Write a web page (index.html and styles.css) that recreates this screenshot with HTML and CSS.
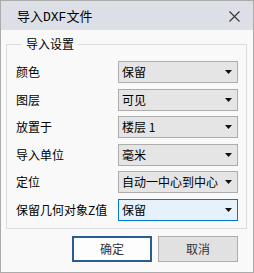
FILE: index.html
```html
<!DOCTYPE html>
<html lang="zh">
<head>
<meta charset="utf-8">
<link rel="stylesheet" href="styles.css">
</head>
<body>
<div class="window">
  <div class="titlebar">
    <span class="title">导入DXF文件</span>
    <svg class="close" width="11" height="11" viewBox="0 0 11 11"><path d="M0.5 0.5 L10.5 10.5 M10.5 0.5 L0.5 10.5" stroke="#333" stroke-width="1.1" fill="none"/></svg>
  </div>
  <fieldset class="group">
    <legend>导入设置</legend>
    <div class="rows">
      <span class="label">颜色</span>
      <div class="select"><span>保留</span><svg class="arrow" width="7" height="4" viewBox="0 0 7 4"><polygon points="0,0 7,0 3.5,4" fill="#111"/></svg></div>
      <span class="label">图层</span>
      <div class="select"><span>可见</span><svg class="arrow" width="7" height="4" viewBox="0 0 7 4"><polygon points="0,0 7,0 3.5,4" fill="#111"/></svg></div>
      <span class="label">放置于</span>
      <div class="select"><span>楼层 1</span><svg class="arrow" width="7" height="4" viewBox="0 0 7 4"><polygon points="0,0 7,0 3.5,4" fill="#111"/></svg></div>
      <span class="label">导入单位</span>
      <div class="select"><span>毫米</span><svg class="arrow" width="7" height="4" viewBox="0 0 7 4"><polygon points="0,0 7,0 3.5,4" fill="#111"/></svg></div>
      <span class="label">定位</span>
      <div class="select"><span>自动一中心到中心</span><svg class="arrow" width="7" height="4" viewBox="0 0 7 4"><polygon points="0,0 7,0 3.5,4" fill="#111"/></svg></div>
      <span class="label">保留几何对象Z值</span>
      <div class="select focused"><span>保留</span><svg class="arrow" width="7" height="4" viewBox="0 0 7 4"><polygon points="0,0 7,0 3.5,4" fill="#111"/></svg></div>
    </div>
  </fieldset>
  <div class="buttons">
    <button class="btn primary">确定</button>
    <button class="btn">取消</button>
  </div>
</div>
</body>
</html>
```
FILE: styles.css
```css
html, body {
  margin: 0;
  padding: 0;
  background: #ffffff;
}
.window {
  width: 254px;
  height: 273px;
  box-sizing: border-box;
  border: 1px solid #ababab;
  background: #f9f9f9;
  display: flex;
  flex-direction: column;
  font-family: "Noto Sans CJK SC", sans-serif;
  font-size: 12px;
  color: #000;
}
.titlebar {
  height: 29px;
  background: #dce0e6;
  display: flex;
  align-items: center;
  justify-content: space-between;
  padding: 0 13px 0 16px;
}
.title {
  font-family: "Liberation Mono", "Noto Sans CJK SC", monospace;
  font-size: 13px;
  color: #000;
}
.close {
  display: block;
  margin-top: 1px;
}
.group {
  margin: 6px 6px 0 5px;
  padding: 0 8px 7px 9px;
  border: 1px solid #dcdcdc;
  min-width: 0;
}
.group legend {
  margin-left: 6px;
  padding: 0 4px;
  line-height: 16px;
  font-size: 12px;
}
.rows {
  padding-top: 9px;
  display: grid;
  grid-template-columns: 102px 120px;
  row-gap: 5.6px;
  align-items: center;
}
.label {
  line-height: 16px;
  white-space: nowrap;
}
.select {
  height: 22px;
  box-sizing: border-box;
  border: 1px solid #adadad;
  background: #e5e5e5;
  display: flex;
  align-items: center;
  justify-content: space-between;
  padding: 0 5px 0 3px;
  line-height: 16px;
  white-space: nowrap;
}
.select.focused {
  border-color: #0078d7;
  background: #e5f1fb;
}
.arrow {
  display: block;
}
.buttons {
  display: flex;
  justify-content: flex-end;
  gap: 6px;
  margin-top: 7px;
  padding-right: 15px;
}
.btn {
  width: 80px;
  height: 26px;
  box-sizing: border-box;
  border: 1px solid #adadad;
  background: #e1e1e1;
  font-family: "Noto Sans CJK SC", sans-serif;
  font-size: 12px;
  color: #333;
  padding: 0;
  margin: 0;
}
.btn.primary {
  border: 2px solid #2b5a99;
  background: #fdfdfd;
}
```
